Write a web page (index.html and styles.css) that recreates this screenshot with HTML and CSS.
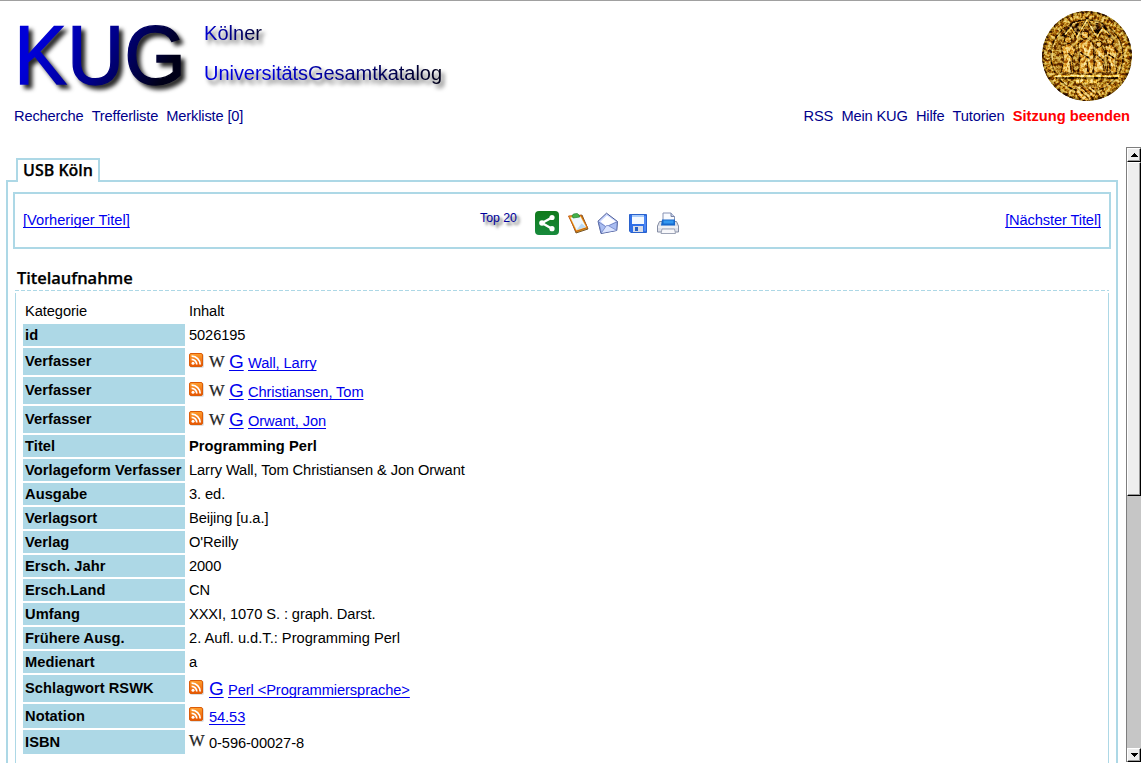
FILE: index.html
```html
<!DOCTYPE html>
<html lang="de">
<head>
<meta charset="utf-8">
<title>KUG - Kölner UniversitätsGesamtkatalog</title>
<link rel="stylesheet" href="styles.css">
</head>
<body>
<svg class="defs" width="0" height="0" aria-hidden="true">
  <defs>
    <linearGradient id="rssFill" x1="0" y1="0" x2="0" y2="1"><stop offset="0" stop-color="#ffa030"/><stop offset="1" stop-color="#e85400"/></linearGradient>
    <symbol id="rss" viewBox="0 0 15 15">
      <rect x="1" y="1" width="14" height="14" rx="2" fill="#c8c8c8" opacity=".6"/>
      <rect x=".5" y=".5" width="13" height="13" rx="1.5" fill="url(#rssFill)" stroke="#dc5c08"/>
      <circle cx="4" cy="10.2" r="1.5" fill="#fff"/>
      <path d="M2.6 6.4a5.2 5.2 0 0 1 5.2 5.2M2.6 3.2a8.4 8.4 0 0 1 8.6 8.4" fill="none" stroke="#fff" stroke-width="1.7"/>
    </symbol>
  </defs>
</svg>

<header class="header">
  <div class="brand">
    <svg class="logo" width="460" height="98" viewBox="0 0 460 98">
      <defs>
        <linearGradient id="kugFill" gradientUnits="userSpaceOnUse" x1="50" y1="20" x2="160" y2="84"><stop offset="0" stop-color="#0000d8"/><stop offset=".5" stop-color="#00008a"/><stop offset="1" stop-color="#000018"/></linearGradient>
        <linearGradient id="shortFill" gradientUnits="userSpaceOnUse" x1="205" y1="0" x2="262" y2="0"><stop offset="0" stop-color="#0000d0"/><stop offset="1" stop-color="#000030"/></linearGradient>
        <linearGradient id="longFill" gradientUnits="userSpaceOnUse" x1="205" y1="0" x2="442" y2="0"><stop offset="0" stop-color="#0000e0"/><stop offset=".3" stop-color="#0000d0"/><stop offset="1" stop-color="#000018"/></linearGradient>
      </defs>
      <g class="logo-big"><text x="14" y="84" font-size="83" textLength="172" lengthAdjust="spacingAndGlyphs" fill="url(#kugFill)" stroke="url(#kugFill)" stroke-width="1.3">KUG</text></g>
      <g class="logo-small">
        <text x="204" y="40" font-size="20" textLength="58" fill="url(#shortFill)">Kölner</text>
        <text x="204" y="80" font-size="20" textLength="238" fill="url(#longFill)">UniversitätsGesamtkatalog</text>
      </g>
    </svg>
    <svg class="seal" width="92" height="92" viewBox="0 0 92 92">
      <defs>
        <filter id="relief" x="0" y="0" width="100%" height="100%" color-interpolation-filters="sRGB">
          <feTurbulence type="fractalNoise" baseFrequency=".3" numOctaves="3" seed="7" result="noise"/>
          <feColorMatrix in="noise" values="3.4 0 0 0 -1.15  3.4 0 0 0 -1.15  3.4 0 0 0 -1.15  0 0 0 0 1" result="grain"/>
          <feBlend in="grain" in2="SourceGraphic" mode="hard-light" result="hard"/>
          <feBlend in="grain" in2="SourceGraphic" mode="soft-light" result="soft"/>
          <feComposite in="hard" in2="soft" operator="arithmetic" k2=".2" k3=".8" result="mix"/>
          <feComposite in="mix" in2="SourceGraphic" operator="in"/>
        </filter>
      </defs>
      <g filter="url(#relief)">
        <circle cx="46" cy="46" r="45" fill="#a86e0a"/>
        <circle cx="46" cy="46" r="44" fill="none" stroke="#6a3c00" stroke-width="1.5"/>
        <circle cx="46" cy="46" r="39.5" fill="none" stroke="#e0a224" stroke-width="5" stroke-dasharray="2 1.5 1 2"/>
        <circle cx="46" cy="46" r="36" fill="none" stroke="#4a2600" stroke-width="1.5"/>
        <circle cx="46" cy="46" r="35" fill="none" stroke="#e6ac30"/>
        <path d="M14 34V65H78V34L66 14H26Z" fill="#a5690c"/>
        <g fill="none" stroke="#2a1200" stroke-width="3"><path d="M22 27l8-11 6 11 10-17 10 17 6-11 8 11M36 13v14M56 13v14"/></g>
        <g fill="none" stroke="#ffc93c" stroke-width="1.5"><path d="M24 25l6-7 6 9 10-17 10 17 6-9 6 7M36 27v9M56 27v9"/></g>
        <g fill="#e2a228" stroke="#4a2200">
          <path d="M20 37l8-4 7 6-4 11 2 13H20l3-14z"/><path d="M37 34l8-6 7 5 1 16-1 15H37l2-16z"/><path d="M54 39l6-4 4 7-1 9 3 12H52l2-12z"/><path d="M64 36l7-2 5 8-2 10 2 11H66l1-12z"/>
          <circle cx="27" cy="30" r="3.6"/><circle cx="44" cy="25" r="4"/><circle cx="58" cy="34" r="3"/><circle cx="69" cy="31" r="3.4"/>
        </g>
        <path d="M25 38l4 9-4 13M42 35l4 11-4 15M49 36l-2 11 3 13M59 42l-1 9 3 11M70 39l-1 9 3 12M18 45h14M56 46h18" fill="none" stroke="#ffe27a"/>
        <path d="M27 43l5 5M39 42l10 7M56 45l7 6M67 44l6 4M29 51l1 11M46 51l1 11M62 53l1 8M69 53v9" stroke="#3c1a00" stroke-width="1.3"/>
        <path d="M14 66H78" stroke="#ffd858" stroke-width="2"/><path d="M15 68H77" stroke="#3c1c00" stroke-width="1.5"/>
        <path d="M35 71.5H58" stroke="#ffd14c" stroke-width="4" stroke-dasharray="3 1.5"/>
        <path d="M23 76H69" stroke="#f0b534"/>
        <path d="M35 76H56V82Q54 89 45.5 91Q36 89 35 82Z" fill="#eeb33a" stroke="#6d3a00"/>
        <path d="M36 78l12 11M40 77l12 11M45 77l10 8M50 77l5 4" stroke="#774300" stroke-width="1.5"/>
      </g>
    </svg>
  </div>
  <nav class="nav">
    <div class="nav-group"><a>Recherche</a><a>Trefferliste</a><a>Merkliste [0]</a></div>
    <div class="nav-group"><a>RSS</a><a>Mein KUG</a><a>Hilfe</a><a>Tutorien</a><a class="logout">Sitzung beenden</a></div>
  </nav>
</header>

<main class="viewport">
  <div class="content">
    <div class="tabs"><div class="tab">USB Köln</div></div>
    <section class="panel">
      <div class="toolbar">
        <a class="link prev" href="#">[Vorheriger Titel]</a>
        <div class="tools">
          <span class="top20">Top 20</span>
          <svg width="24" height="24" viewBox="0 0 24 24"><defs><linearGradient id="shareFill" x1="0" y1="0" x2="0" y2="1"><stop offset="0" stop-color="#117a1c"/><stop offset="1" stop-color="#178a3c"/></linearGradient></defs><rect width="24" height="24" rx="4" fill="url(#shareFill)"/><path d="M17 6.5L7 12l10 5.7" fill="none" stroke="#fff" stroke-width="2.4"/><g fill="#fff"><circle cx="17" cy="6.5" r="2.6"/><circle cx="7" cy="12" r="2.8"/><circle cx="17" cy="17.7" r="2.6"/></g></svg>
          <svg width="22" height="22" viewBox="0 0 22 22"><path d="M3 6L15 3l6 14-12 4z" fill="#d6a21c" stroke="#6c4822" stroke-width=".9" stroke-linejoin="round"/><path d="M1.5 4L14 3.2l6.500 12.300L9 19.500z" fill="#f8ad28" stroke="#c35c14" stroke-linejoin="round"/><path d="M3.500 5.500L13.500 4.700l5.500 10.300-9.500 3z" fill="#eef7ff"/><path d="M14.500 11.500l4.500 3.500-9.500 3z" fill="#bad9f3"/><path d="M5 4l1.400-2 3.800-.5 1.800 1.500.7 2-6.600 1z" fill="#43b14b" stroke="#22812e" stroke-width=".7"/></svg>
          <svg width="22" height="22" viewBox="0 0 22 22"><path d="M1 9.200L9.500 1.200 20.500 9.500l-.8 9L4 21.500z" fill="#c8d5ff" stroke="#4b5a94" stroke-linejoin="round"/><path d="M3.500 9.500L10 3.500 18.500 9.500 9.500 14.500z" fill="#fff"/><path d="M1.500 9.800L9 14.800l11.200-5L19.600 18.300 4.300 21z" fill="#a9bdf2" stroke="#6679b8" stroke-width=".8"/><path d="M4.300 21l5.200-7.500 2 .2 8 4.600" fill="#dce5ff" stroke="#7286c6" stroke-width=".8"/></svg>
          <svg class="disk" width="18" height="19" viewBox="0 0 18 19"><path d="M.5.500h17v18H1.800L.5 17z" fill="#2f6fe8" stroke="#2a62cc"/><path d="M3 1h12v9H3z" fill="#f4f9ff"/><path d="M3 1h12v2H3z" fill="#a9ccfa"/><path d="M4 12h10v6H4z" fill="#d7dce8"/><path d="M6 13h3v4H6z" fill="#245fc3"/><path d="M16 2v15" stroke="#71a2ff"/></svg>
          <svg width="24" height="24" viewBox="0 0 24 24"><path d="M7 12V2h8l3.500 3.500V12z" fill="#f9fbff" stroke="#8893b4"/><path d="M15 2v3.500h3.500" fill="#c5cee5" stroke="#7884a7"/><path d="M3.500 10.500h17L22.500 15v6h-21v-6z" fill="#dde0e9" stroke="#858da4" stroke-linejoin="round"/><path d="M6 8.500h13v6H5z" fill="#1668cc"/><path d="M7.500 9.500h10v3h-10z" fill="#3398f0"/><path d="M2 16h20" stroke="#fff"/><path d="M6 18h12.500l1 4.500H5z" fill="#f7f7fa" stroke="#9da4b6"/></svg>
        </div>
        <a class="link next" href="#">[Nächster Titel]</a>
      </div>
      <h2 class="title">Titelaufnahme</h2>
      <div class="dashes"></div>
      <div class="record">
        <div class="row head"><div class="key">Kategorie</div><div class="val">Inhalt</div></div>
        <div class="row"><div class="key">id</div><div class="val">5026195</div></div>
        <div class="row person"><div class="key">Verfasser</div><div class="val"><svg class="rss"><use href="#rss"/></svg><span class="wiki">W</span><a class="google" href="#">G</a><a class="link" href="#">Wall, Larry</a></div></div>
        <div class="row person"><div class="key">Verfasser</div><div class="val"><svg class="rss"><use href="#rss"/></svg><span class="wiki">W</span><a class="google" href="#">G</a><a class="link" href="#">Christiansen, Tom</a></div></div>
        <div class="row person"><div class="key">Verfasser</div><div class="val"><svg class="rss"><use href="#rss"/></svg><span class="wiki">W</span><a class="google" href="#">G</a><a class="link" href="#">Orwant, Jon</a></div></div>
        <div class="row"><div class="key">Titel</div><div class="val strong">Programming Perl</div></div>
        <div class="row"><div class="key">Vorlageform Verfasser</div><div class="val">Larry Wall, Tom Christiansen &amp; Jon Orwant</div></div>
        <div class="row"><div class="key">Ausgabe</div><div class="val">3. ed.</div></div>
        <div class="row"><div class="key">Verlagsort</div><div class="val">Beijing [u.a.]</div></div>
        <div class="row"><div class="key">Verlag</div><div class="val">O'Reilly</div></div>
        <div class="row"><div class="key">Ersch. Jahr</div><div class="val">2000</div></div>
        <div class="row"><div class="key">Ersch.Land</div><div class="val">CN</div></div>
        <div class="row"><div class="key">Umfang</div><div class="val">XXXI, 1070 S. : graph. Darst.</div></div>
        <div class="row"><div class="key">Frühere Ausg.</div><div class="val wide">2. Aufl. u.d.T.: Programming Perl</div></div>
        <div class="row"><div class="key">Medienart</div><div class="val">a</div></div>
        <div class="row person"><div class="key">Schlagwort RSWK</div><div class="val"><svg class="rss"><use href="#rss"/></svg><a class="google" href="#">G</a><a class="link" href="#">Perl &lt;Programmiersprache&gt;</a></div></div>
        <div class="row notation"><div class="key">Notation</div><div class="val"><svg class="rss"><use href="#rss"/></svg><a class="link" href="#">54.53</a></div></div>
        <div class="row isbn"><div class="key">ISBN</div><div class="val"><span class="wiki">W</span><span>0-596-00027-8</span></div></div>
      </div>
    </section>
  </div>
  <div class="scrollbar">
    <div class="sb-box"><svg width="7" height="4" viewBox="0 0 7 4"><path d="M3 0h1v1h1v1h1v1h1v1H0V3h1V2h1V1h1z"/></svg></div>
    <div class="sb-thumb"></div>
    <div class="sb-track"></div>
    <div class="sb-box"><svg width="7" height="4" viewBox="0 0 7 4"><path d="M0 0h7v1H6v1H5v1H4v1H3V3H2V2H1V1H0z"/></svg></div>
  </div>
</main>
</body>
</html>
```

FILE: styles.css
```css
* { box-sizing: border-box; }
html, body { height: 763px; overflow: hidden; }
body {
  margin: 0;
  background: #fff;
  color: #000;
  font: 14.67px/22px "Liberation Sans", Arial, sans-serif;
  display: flex;
  flex-direction: column;
}
.defs { width: 0; height: 0; flex: none; }
.header { height: 147px; flex: none; border-top: 1px solid #a0a0a0; }
.brand { display: flex; justify-content: space-between; height: 104px; padding-right: 8px; }
.logo { font-family: "Liberation Sans", Arial, sans-serif; margin-top: -1px; overflow: visible; }
.logo-big { filter: drop-shadow(4px 4px 2px rgba(0, 0, 0, .85)); }
.logo-small { filter: drop-shadow(3px 4px 2px rgba(0, 0, 0, .65)); }
.seal { margin-top: 9px; }
.nav { display: flex; justify-content: space-between; padding: 0 11px 0 14px; }
.nav-group { display: flex; gap: 8.2px; color: #00008b; letter-spacing: -.16px; }
.logout { color: #f00; font-weight: bold; letter-spacing: 0; }

.viewport { flex: 1; min-height: 0; display: flex; }
.content { flex: 1; padding: 11px 8px 0 6px; }
.tabs { display: flex; padding-left: 10px; height: 22px; }
.tab {
  height: 24px;
  width: 84px;
  padding-left: 5px;
  border: 2px solid #add8e6;
  border-bottom: 0;
  background: #fff;
  z-index: 1;
  font: 600 16px/21px "Open Sans", "Noto Sans", sans-serif;
  -webkit-text-stroke: .25px #000;
  white-space: nowrap;
}
.panel { height: 600px; border: 2px solid #add8e6; border-bottom: 0; padding: 10px 5px 0; }
.toolbar {
  height: 57px;
  border: 2px solid #add8e6;
  padding: 15px 8px 0;
  display: flex;
}
.link, .google { color: #00e; text-decoration: underline; text-decoration-thickness: 1px; text-underline-offset: 2px; text-decoration-skip-ink: none; }
.prev { width: 107px; white-space: nowrap; }
.next { margin-left: auto; letter-spacing: -.12px; }
.tools { display: flex; align-items: center; height: 28px; gap: 8px; margin-left: 350px; }
.tools .disk { margin: 1px 1px 0 2px; }
.top20 { width: 47px; font-size: 12.3px; color: #00009c; margin-top: -10px; white-space: nowrap; text-shadow: 3px 3px 3px rgba(0, 0, 0, .7); }
.title { margin: 17px 0 0 4px; height: 24px; font: 600 16.5px/23px "Open Sans", "Noto Sans", sans-serif; letter-spacing: -.05px; -webkit-text-stroke: .25px #000; }
.dashes { height: 1px; margin: 0 2px 2px; background: repeating-linear-gradient(90deg, #add8e6 0 4px, transparent 4px 6px); }
.record {
  margin: 0 2px;
  height: 480px;
  padding: 7px 0 0 7px;
  border: 1px solid #add8e6;
  border-width: 0 1px;
  display: flex;
  flex-direction: column;
  gap: 2px;
}
.row { display: flex; height: 22px; flex: none; gap: 2px; }
.key { width: 162px; padding-left: 2px; background: #add8e6; font-weight: bold; letter-spacing: .06px; white-space: nowrap; }
.val { padding-left: 2px; display: flex; white-space: nowrap; letter-spacing: -.09px; }
.wide { letter-spacing: 0; }
.head .key { background: none; font-weight: normal; letter-spacing: -.08px; }
.val.strong { font-weight: bold; letter-spacing: .05px; }
.person { height: 27px; }
.person .key { line-height: 26px; }
.person .val { line-height: 30px; }
.notation, .isbn { height: 24px; }
.notation .key, .isbn .key { line-height: 24px; }
.notation .val, .isbn .val { line-height: 26px; }
.rss { width: 15px; height: 15px; margin: 5px 5px 0 0; }
.notation .rss { margin-top: 3px; }
.wiki { width: 20px; font: 16.5px/27px "Liberation Serif", serif; color: #222; -webkit-text-stroke: .25px #333; }
.google { width: 19px; font-size: 19px; line-height: 27px; }
.isbn .wiki { line-height: 22px; }

.scrollbar { width: 15px; height: 615px; border-left: 1px solid #7e7e7e; border-top: 1px solid #7e7e7e; display: flex; flex-direction: column; }
.sb-box, .sb-thumb { background: #eee; border: 1px solid #fff; border-right: 1px solid #000; border-bottom: 1px solid #000; box-shadow: inset -1px -1px #999; }
.sb-box { height: 14px; display: flex; align-items: center; justify-content: center; flex: none; }
.sb-thumb { height: 334px; flex: none; }
.sb-track { flex: 1; background: #c6c6c6; }
```
